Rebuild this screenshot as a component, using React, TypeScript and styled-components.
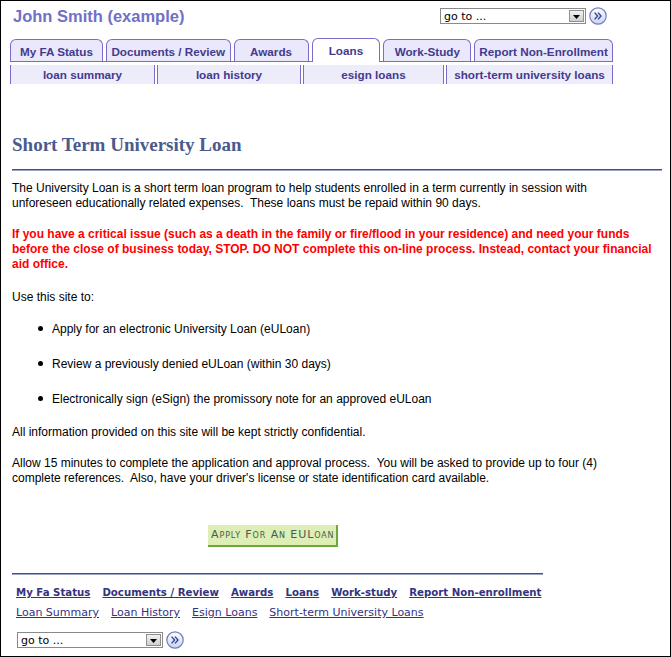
import React from "react"
import styled, { createGlobalStyle } from "styled-components"

const GlobalStyle = createGlobalStyle`
  html, body {
    margin: 0;
    padding: 0;
    background: #fff;
  }
`

const purple = "#7c6cc8"
const tabText = "#453a8e"

const Frame = styled.div`
  box-sizing: border-box;
  width: 671px;
  height: 657px;
  border: 1px solid #000;
  font-family: "Liberation Sans", Arial, sans-serif;
  color: #000;
  overflow: hidden;
`

const Header = styled.div`
  display: flex;
  justify-content: space-between;
  align-items: center;
  height: 30px;
  padding: 0 63px 0 12px;
`

const Name = styled.div`
  font-size: 16.5px;
  font-weight: bold;
  color: #7070c6;
`

const GoTo = styled.div`
  display: flex;
  align-items: center;
  gap: 3px;
`

const SelectBox = styled.div`
  box-sizing: border-box;
  width: 146px;
  height: 16px;
  border: 1px solid #8a8a8a;
  display: flex;
  align-items: center;
  justify-content: space-between;
  padding: 0 1px 0 3px;
  font-family: "DejaVu Sans", Verdana, sans-serif;
  font-size: 11px;
  color: #000;
  background: #fff;
`

const DropButton = styled.div`
  box-sizing: border-box;
  width: 15px;
  height: 12px;
  background: linear-gradient(#f2f2f2, #cfcfcf);
  border: 1px solid #8e8e8e;
  display: flex;
  align-items: flex-end;
  justify-content: center;
  padding-bottom: 2px;
`

const Tabs = styled.div`
  display: flex;
  align-items: flex-end;
  gap: 3px;
  width: 603px;
  margin: 7px 0 0 9px;
  border-bottom: 1px solid ${purple};
  height: 23px;
`

const Tab = styled.div<{ $w: number; $active?: boolean }>`
  box-sizing: border-box;
  width: ${(p) => p.$w}px;
  height: ${(p) => (p.$active ? 24 : 22)}px;
  margin-bottom: ${(p) => (p.$active ? -1 : 0)}px;
  border: 1px solid ${purple};
  border-bottom: none;
  border-radius: 6px 6px 0 0;
  background: ${(p) => (p.$active ? "#fff" : "#e9e9fb")};
  display: flex;
  align-items: center;
  justify-content: center;
  padding-top: ${(p) => (p.$active ? 0 : 1)}px;
  font-size: 11.7px;
  font-weight: bold;
  color: ${tabText};
  white-space: nowrap;
`

const SubTabs = styled.div`
  display: flex;
  gap: 2px;
  margin: 3px 0 0 9px;
`

const SubTab = styled.div<{ $w: number }>`
  box-sizing: border-box;
  width: ${(p) => p.$w}px;
  height: 19px;
  background: #ececfb;
  border-left: 1px solid ${purple};
  border-right: 1px solid ${purple};
  display: flex;
  align-items: center;
  justify-content: center;
  font-size: 11.7px;
  font-weight: bold;
  color: ${tabText};
  white-space: nowrap;
`

const Main = styled.div`
  padding: 0 8px 0 11px;
  font-size: 12px;
  line-height: 15px;
`

const Title = styled.h1`
  margin: 49px 0 12px;
  font-family: "Liberation Serif", "Times New Roman", serif;
  font-size: 19px;
  line-height: 24px;
  font-weight: bold;
  color: #4a5a8c;
`

const Rule = styled.div<{ $w?: number }>`
  height: 1px;
  width: ${(p) => (p.$w ? `${p.$w}px` : "auto")};
  background: #3f4f88;
  border-bottom: 1px solid #9aa4c6;
`

const Para = styled.p<{ $top: number; $warn?: boolean }>`
  margin: ${(p) => p.$top}px 0 0;
  color: ${(p) => (p.$warn ? "#ff0000" : "#000")};
  font-weight: ${(p) => (p.$warn ? "bold" : "normal")};
`

const List = styled.ul`
  margin: 17px 0 0;
  padding: 0 0 0 40px;
  list-style: none;
`

const Item = styled.li`
  margin-top: 20px;
  &:first-child {
    margin-top: 0;
  }
  &::before {
    content: "";
    display: inline-block;
    width: 5px;
    height: 5px;
    border-radius: 50%;
    background: #000;
    margin: 0 9px 2px -14px;
    vertical-align: middle;
  }
`

const ApplyButton = styled.button`
  box-sizing: border-box;
  display: block;
  margin: 39px 0 0 196px;
  width: 130px;
  height: 22px;
  padding: 0 0 1px 3px;
  background: #ddeeb6;
  border: none;
  border-right: 2px solid #6aa83a;
  border-bottom: 2px solid #6aa83a;
  font-family: "DejaVu Sans", Verdana, sans-serif;
  font-size: 11px;
  font-variant: small-caps;
  letter-spacing: 0.9px;
  color: #45604c;
  text-align: left;
  white-space: nowrap;
  cursor: pointer;
`

const Footer = styled.div`
  padding: 26px 0 0 11px;
`

const FooterLinks = styled.div<{ $bold?: boolean }>`
  display: flex;
  gap: 12px;
  padding-left: 4px;
  margin-top: ${(p) => (p.$bold ? 11 : 6)}px;
  font-family: "DejaVu Sans", Verdana, sans-serif;
  font-size: ${(p) => (p.$bold ? 10.2 : 11)}px;
  line-height: 14px;
  font-weight: ${(p) => (p.$bold ? "bold" : "normal")};
`

const FooterLink = styled.a`
  color: #33337f;
  text-decoration: underline;
  white-space: nowrap;
`

const FooterGoTo = styled.div`
  margin: 11px 0 0 5px;
`

const GoButton = () => (
  <svg width="18" height="18" viewBox="0 0 18 18">
    <defs>
      <linearGradient id="gob" x1="0" y1="0" x2="0" y2="1">
        <stop offset="0" stopColor="#ffffff" />
        <stop offset="1" stopColor="#c9d3f2" />
      </linearGradient>
    </defs>
    <circle cx="9" cy="9" r="8.2" fill="url(#gob)" stroke="#6f7dc0" strokeWidth="1.2" />
    <path d="M5.6 5.6 L8.6 9 L5.6 12.4 M9 5.6 L12 9 L9 12.4" fill="none" stroke="#33449a" strokeWidth="1.4" />
  </svg>
)

const DropArrow = () => (
  <svg width="7" height="4" viewBox="0 0 7 4">
    <path d="M0 0 H7 L3.5 4 Z" fill="#000" />
  </svg>
)

const Jump = () => (
  <GoTo>
    <SelectBox>
      <span>go to ...</span>
      <DropButton>
        <DropArrow />
      </DropButton>
    </SelectBox>
    <GoButton />
  </GoTo>
)

const tabs = [
  { label: "My FA Status", w: 93 },
  { label: "Documents / Review", w: 125 },
  { label: "Awards", w: 75 },
  { label: "Loans", w: 69, active: true },
  { label: "Work-Study", w: 88 },
  { label: "Report Non-Enrollment", w: 139 },
]

const subTabs = [
  { label: "loan summary", w: 145 },
  { label: "loan history", w: 144 },
  { label: "esign loans", w: 141 },
  { label: "short-term university loans", w: 167 },
]

const mainLinks = ["My Fa Status", "Documents / Review", "Awards", "Loans", "Work-study", "Report Non-enrollment"]
const loanLinks = ["Loan Summary", "Loan History", "Esign Loans", "Short-term University Loans"]

export default function App() {
  return (
    <Frame>
      <GlobalStyle />
      <Header>
        <Name>John Smith (example)</Name>
        <Jump />
      </Header>

      <Tabs>
        {tabs.map((t) => (
          <Tab key={t.label} $w={t.w} $active={t.active}>
            {t.label}
          </Tab>
        ))}
      </Tabs>
      <SubTabs>
        {subTabs.map((t) => (
          <SubTab key={t.label} $w={t.w}>
            {t.label}
          </SubTab>
        ))}
      </SubTabs>

      <Main>
        <Title>Short Term University Loan</Title>
        <Rule />
        <Para $top={10}>
          The University Loan is a short term loan program to help students enrolled in a term currently in session with
          <br />
          unforeseen educationally related expenses.&nbsp; These loans must be repaid within 90 days.
        </Para>
        <Para $top={16} $warn>
          If you have a critical issue (such as a death in the family or fire/flood in your residence) and need your funds
          <br />
          before the close of business today, STOP. DO NOT complete this on-line process. Instead, contact your financial
          <br />
          aid office.
        </Para>
        <Para $top={18}>Use this site to:</Para>
        <List>
          <Item>Apply for an electronic University Loan (eULoan)</Item>
          <Item>Review a previously denied eULoan (within 30 days)</Item>
          <Item>Electronically sign (eSign) the promissory note for an approved eULoan</Item>
        </List>
        <Para $top={18}>All information provided on this site will be kept strictly confidential.</Para>
        <Para $top={16}>
          Allow 15 minutes to complete the application and approval process.&nbsp; You will be asked to provide up to four (4)
          <br />
          complete references.&nbsp; Also, have your driver's license or state identification card available.
        </Para>
        <ApplyButton>Apply For An EULoan</ApplyButton>
      </Main>

      <Footer>
        <Rule $w={531} />
        <FooterLinks $bold>
          {mainLinks.map((l) => (
            <FooterLink key={l} href="#">
              {l}
            </FooterLink>
          ))}
        </FooterLinks>
        <FooterLinks>
          {loanLinks.map((l) => (
            <FooterLink key={l} href="#">
              {l}
            </FooterLink>
          ))}
        </FooterLinks>
        <FooterGoTo>
          <Jump />
        </FooterGoTo>
      </Footer>
    </Frame>
  )
}
